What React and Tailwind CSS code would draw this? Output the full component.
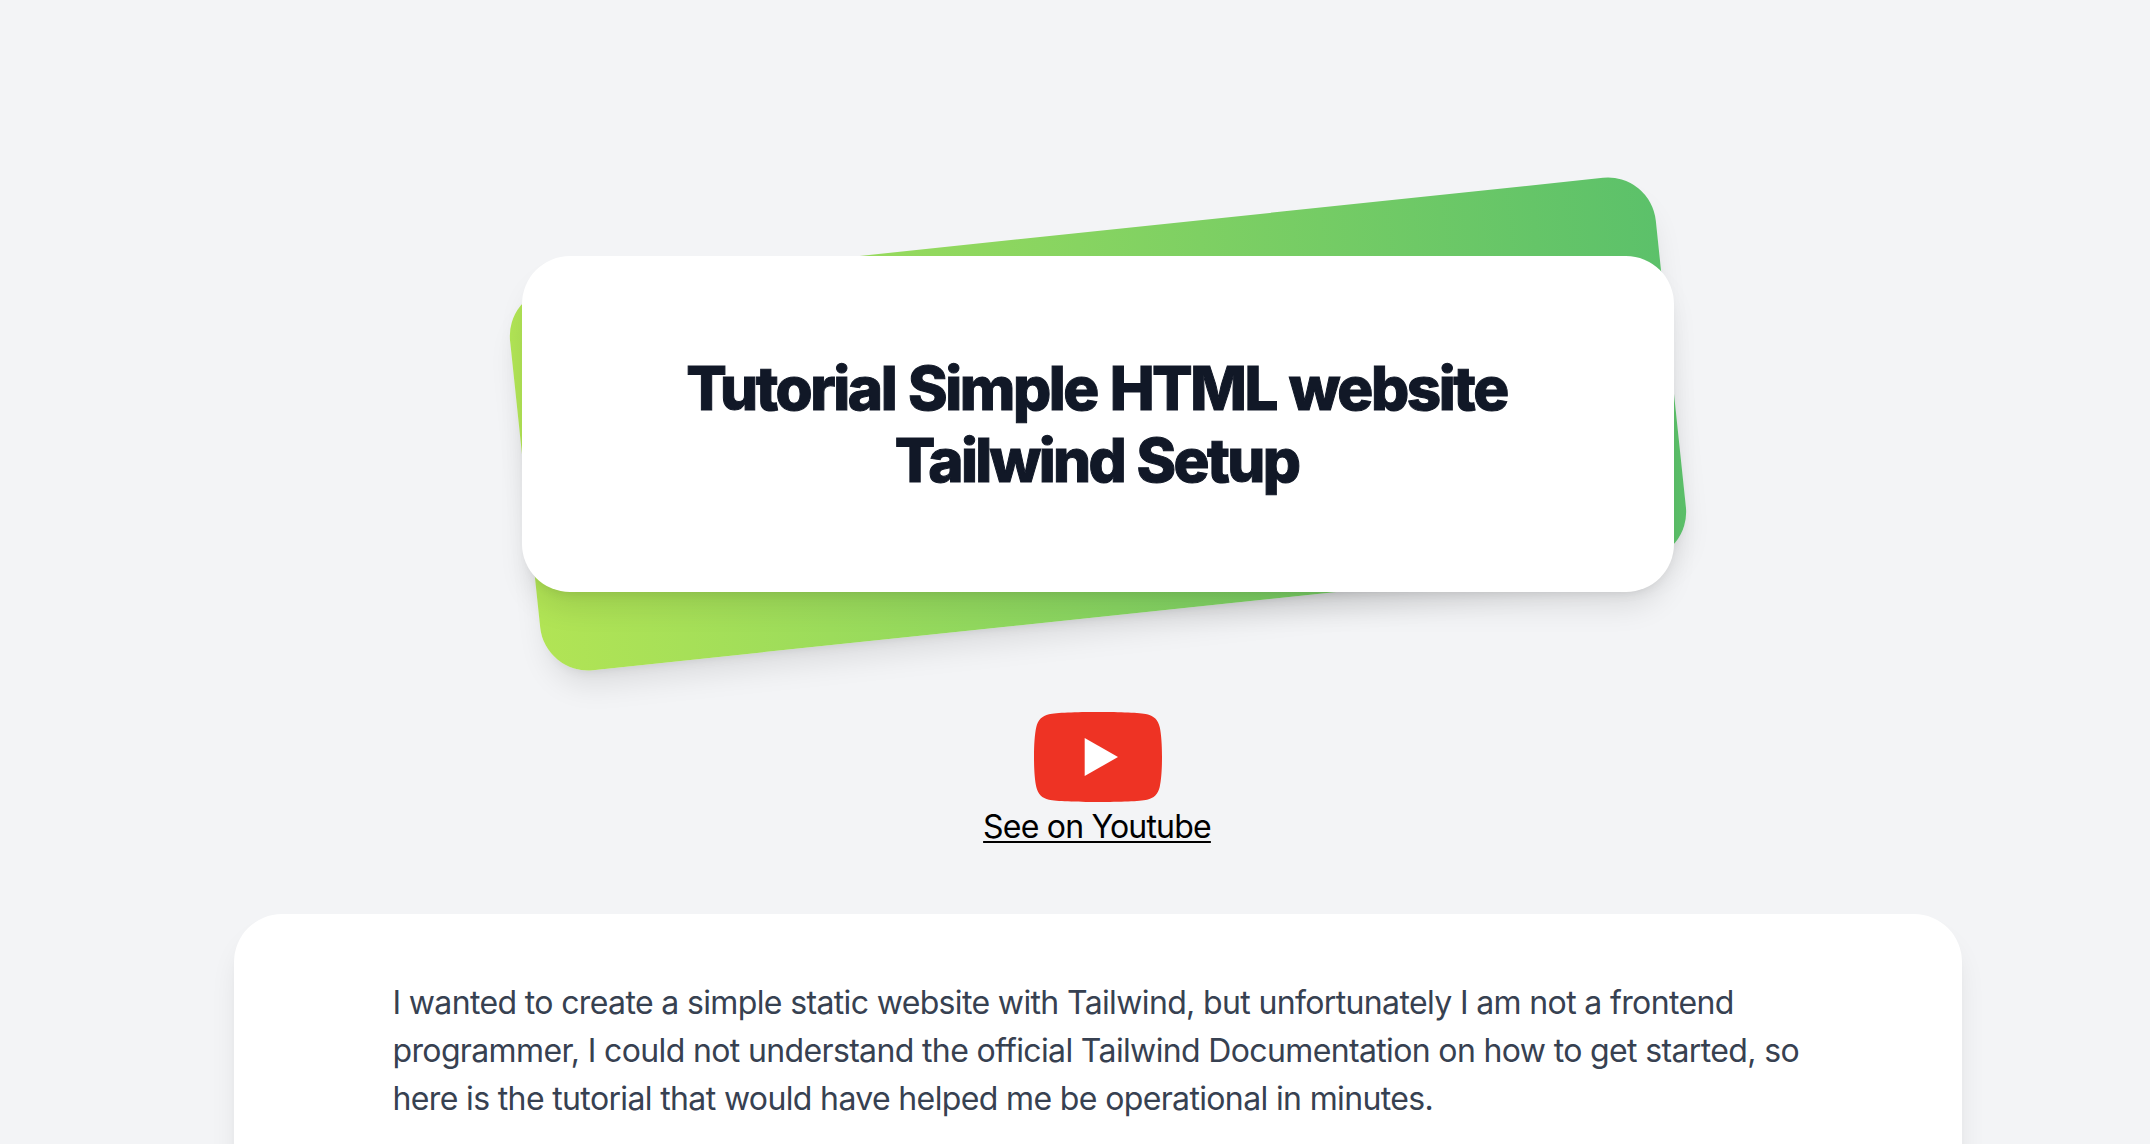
const paragraph = [
  "I wanted to create a simple static website with Tailwind, but unfortunately I am not a frontend",
  "programmer, I could not understand the official Tailwind Documentation on how to get started, so",
  "here is the tutorial that would have helped me be operational in minutes.",
];

function PlayLogo() {
  return (
    <svg viewBox="0 0 128 90" className="block h-[90px] w-32" aria-hidden="true">
      <path
        fill="#ee3324"
        d="M64 0C86 0 106 .6 113 2.200C120 3.800 124 8 125.700 15C127.300 22 128 33 128 45C128 57 127.300 68 125.700 75C124 82 120 86.200 113 87.800C106 89.400 86 90 64 90C42 90 22 89.400 15 87.800C8 86.200 4 82 2.300 75C.7 68 0 57 0 45C0 33 .7 22 2.300 15C4 8 8 3.800 15 2.200C22 .6 42 0 64 0Z"
      />
      <path fill="#fff" d="M50.700 26L84 45L50.700 64Z" />
    </svg>
  );
}

export default function App() {
  return (
    <div className="h-[1144px] w-full overflow-hidden bg-gray-100 font-['Inter',sans-serif]">
      <div className="flex w-[2196px] flex-col items-center pt-64">
        <header className="relative w-[1152px]">
          <div className="absolute inset-x-0 -inset-y-6 -rotate-6 rounded-[48px] bg-[linear-gradient(to_right,#b1e455,#87d461_50%,#5cc16a)] shadow-[0_20px_30px_-6px_rgba(0,0,0,0.1),0_8px_12px_-8px_rgba(0,0,0,0.1)]" />
          <div className="relative rounded-[48px] bg-white py-24 shadow-[0_20px_30px_-6px_rgba(0,0,0,0.1),0_8px_12px_-8px_rgba(0,0,0,0.1)]">
            <h1 className="pr-[3px] text-center text-[60px] leading-[72px] font-extrabold text-[#111827] [word-spacing:2px] [-webkit-text-stroke:1px_#111827]">
              <span className="block tracking-[-2.43px]">Tutorial Simple HTML website</span>
              <span className="block tracking-[-2.65px]">Tailwind Setup</span>
            </h1>
          </div>
        </header>

        <a href="#" className="mt-[120px] flex flex-col items-center text-[32px] leading-[48px] text-black">
          <PlayLogo />
          <span className="mt-px mr-[2px] -mb-px tracking-[-0.8px] underline decoration-[2px] underline-offset-[3px] [text-decoration-skip-ink:none]">
            See on Youtube
          </span>
        </a>

        <main className="mt-16 h-96 w-[1728px] rounded-[48px] bg-white pt-[65px] pr-40 pl-[158.5px] shadow-[0_20px_30px_-6px_rgba(0,0,0,0.1),0_8px_12px_-8px_rgba(0,0,0,0.1)]">
          <p className="text-[32px] leading-[48px] tracking-[-0.64px] whitespace-nowrap text-[#374151]">
            {paragraph.map((line) => (
              <span key={line} className="block">
                {line}
              </span>
            ))}
          </p>
        </main>
      </div>
    </div>
  );
}
